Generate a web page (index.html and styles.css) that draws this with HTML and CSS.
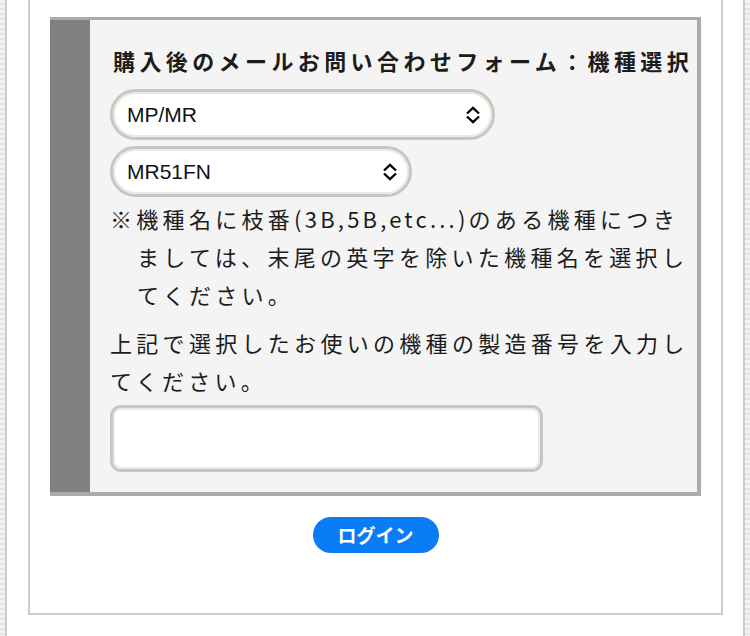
FILE: index.html
```html
<!DOCTYPE html>
<html lang="ja">
<head>
<meta charset="utf-8">
<title>機種選択</title>
<link rel="stylesheet" href="styles.css">
</head>
<body>
<div class="page">
  <div class="panel">
    <form class="formbox">
      <div class="bar"></div>
      <div class="content">
        <h2 class="title">購入後のメールお問い合わせフォーム：機種選択</h2>
        <div class="select-wrap sel-series">
          <select class="select">
            <option>MP/MR</option>
          </select>
          <svg class="arrow" width="16" height="18" viewBox="0 0 16 18"><path d="M2 7.5 L8 1.8 L14 7.5 M2 10.5 L8 16.2 L14 10.5" fill="none" stroke="#000" stroke-width="2.3"/></svg>
        </div>
        <div class="select-wrap sel-model">
          <select class="select">
            <option>MR51FN</option>
          </select>
          <svg class="arrow" width="16" height="18" viewBox="0 0 16 18"><path d="M2 7.5 L8 1.8 L14 7.5 M2 10.5 L8 16.2 L14 10.5" fill="none" stroke="#000" stroke-width="2.3"/></svg>
        </div>
        <p class="note">※機種名に枝番<span class="latin">(3B,5B,etc...)</span>のある機種につきましては、末尾の英字を除いた機種名を選択してください。</p>
        <p class="text">上記で選択したお使いの機種の製造番号を入力してください。</p>
        <input class="serial" type="text">
      </div>
    </form>
    <div class="actions">
      <button class="login" type="button">ログイン</button>
    </div>
  </div>
</div>
</body>
</html>
```
FILE: styles.css
```css
html, body {
  margin: 0;
  padding: 0;
}
body {
  background: repeating-linear-gradient(to bottom, #f3f3f3 0 3px, #e4e4e4 3px 5px);
  font-family: "Noto Sans CJK JP", "Noto Sans", sans-serif;
  color: #1c1c1c;
}
.page {
  margin: 0 5px;
  min-height: 636px;
  box-sizing: border-box;
  background: #fff;
  border-left: 2px solid #cccccc;
  border-right: 2px solid #cccccc;
  padding: 0 20px 21px 21px;
}
.panel {
  border: 2px solid #cccccc;
  border-top: 0;
  padding: 17px 20px 60px;
}
.formbox {
  display: flex;
  margin: 0;
  border-top: 3px solid #ababab;
  border-right: 4px solid #ababab;
  border-bottom: 4px solid #ababab;
}
.bar {
  width: 40px;
  flex: none;
  background: #808080;
}
.content {
  flex: 1;
  background: #f4f4f4;
  padding: 21px 0 20px 20px;
}
.title {
  margin: 0 0 10px;
  padding-left: 3px;
  font-size: 22px;
  font-weight: bold;
  line-height: 38px;
  letter-spacing: 4.4px;
  white-space: nowrap;
}
.select-wrap {
  position: relative;
  margin-bottom: 6px;
}
.sel-series { width: 385px; }
.sel-model { width: 302px; margin-bottom: 2px; }
.select {
  appearance: none;
  -webkit-appearance: none;
  display: block;
  width: 100%;
  height: 51px;
  box-sizing: border-box;
  border: 3px solid #c6c6c6;
  border-radius: 26px;
  box-shadow: inset 0 0 0 2px #ecebdb;
  background: #fff;
  padding: 0 40px 0 14px;
  font-family: "Liberation Sans", "Noto Sans CJK JP", sans-serif;
  font-size: 21px;
  color: #111;
  outline: none;
}
.arrow {
  position: absolute;
  right: 14px;
  top: 17px;
  pointer-events: none;
}
.note, .text {
  margin: 0;
  font-size: 22px;
  line-height: 38px;
  letter-spacing: 4.3px;
}
.latin {
  letter-spacing: 3.2px;
}
.note {
  padding-left: 27px;
  text-indent: -27px;
}
.text {
  margin-top: 10px;
}
.serial {
  display: block;
  margin-top: 6px;
  width: 433px;
  height: 67px;
  box-sizing: border-box;
  border: 3px solid #c6c6c6;
  border-radius: 11px;
  box-shadow: inset 0 0 0 2px #ecebdb;
  background: #fff;
  outline: none;
  font-size: 21px;
}
.actions {
  display: flex;
  justify-content: center;
  margin-top: 21px;
}
.login {
  width: 126px;
  height: 36px;
  border: 0;
  border-radius: 18px;
  background: #0a7cf6;
  color: #fff;
  font-family: "Noto Sans CJK JP", sans-serif;
  font-weight: bold;
  font-size: 19px;
  line-height: 36px;
  padding: 0;
}
```
